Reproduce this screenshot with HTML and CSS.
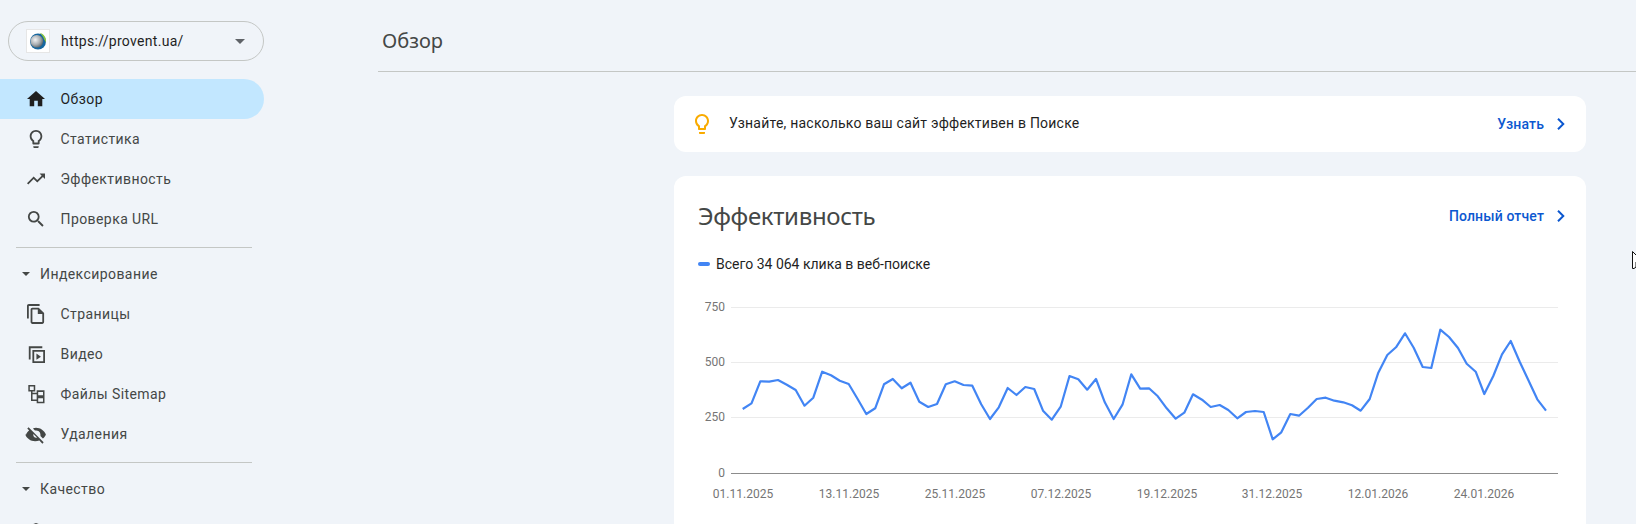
FILE: index.html
```html
<!DOCTYPE html>
<html lang="ru">
<head>
<meta charset="utf-8">
<title>Обзор</title>
<link rel="stylesheet" href="styles.css">
</head>
<body>
<div class="app">
  <aside class="sidebar">
    <div class="picker">
      <span class="favicon">
        <svg width="18" height="18" viewBox="0 0 18 18"><defs><radialGradient id="g" cx="38%" cy="38%" r="65%"><stop offset="0" stop-color="#f2f3f4"/><stop offset=".6" stop-color="#a9aeb2"/><stop offset="1" stop-color="#5f676d"/></radialGradient></defs><circle cx="9" cy="9.500" r="8" fill="#17679f"/><path d="M10.500 .8c4.500 1 7 5 6.500 9.700-.6-1-1.200-2-1.800-3-.9-2.800-2.600-5-4.700-6.700z" fill="#8cc63f"/><circle cx="7.800" cy="9.300" r="6.300" fill="url(#g)"/></svg>
      </span>
      <span class="picker-url">https://provent.ua/</span>
      <span class="caret caret-lg"></span>
    </div>
    <nav class="nav">
      <a class="item active"><svg class="ico" viewBox="0 0 24 24"><path d="M10 20v-6h4v6h5v-8h3L12 3 2 12h3v8z"/></svg><span>Обзор</span></a>
      <a class="item"><svg class="ico" viewBox="0 0 24 24"><path d="M9 21c0 .55.45 1 1 1h4c.55 0 1-.45 1-1v-1H9v1zm3-19C8.140 2 5 5.140 5 9c0 2.380 1.190 4.470 3 5.740V17c0 .55.45 1 1 1h6c.55 0 1-.45 1-1v-2.260c1.810-1.270 3-3.360 3-5.740 0-3.860-3.140-7-7-7zm2.850 11.100l-.85.6V16h-4v-2.300l-.85-.6A4.997 4.997 0 0 1 7 9c0-2.760 2.240-5 5-5s5 2.240 5 5c0 1.630-.8 3.160-2.150 4.100z"/></svg><span>Статистика</span></a>
      <a class="item"><svg class="ico" viewBox="0 0 24 24"><path d="M16 6l2.290 2.290-4.880 4.880-4-4L2 16.590 3.410 18l6-6 4 4 6.300-6.290L22 12V6z"/></svg><span>Эффективность</span></a>
      <a class="item"><svg class="ico" viewBox="0 0 24 24"><path d="M15.500 14h-.79l-.28-.27A6.471 6.471 0 0 0 16 9.500 6.500 6.500 0 1 0 9.500 16c1.610 0 3.090-.59 4.230-1.570l.27.28v.79l5 4.990L20.490 19l-4.990-5zm-6 0C7.010 14 5 11.990 5 9.500S7.010 5 9.500 5 14 7.010 14 9.500 11.990 14 9.500 14z"/></svg><span>Проверка URL</span></a>
      <hr class="rule">
      <div class="section"><span class="caret"></span><span>Индексирование</span></div>
      <a class="item"><svg class="ico" viewBox="0 0 24 24"><path d="M16 1H4c-1.100 0-2 .9-2 2v14h2V3h12V1zm-1 4H8c-1.100 0-2 .9-2 2v14c0 1.100.9 2 2 2h11c1.100 0 2-.9 2-2V11l-6-6zM8 21V7h6v5h5v9H8z"/></svg><span>Страницы</span></a>
      <a class="item"><svg class="ico" viewBox="0 0 24 24"><path d="M4 3.500h15v2H6V18H4z"/><path d="M8 7.500h14V22H8zm2 2V20h10V9.500z" fill-rule="evenodd"/><path d="M12.500 11.500v7l5-3.500z"/></svg><span>Видео</span></a>
      <a class="item"><svg class="ico ico-line" viewBox="0 0 24 24"><path d="M4.300 2.800h6v5.500h-6zM7.300 8.300V19h6M7.300 11.500h6M13.600 8.800h7v5.400h-7zM13.600 16h7v5.400h-7z"/></svg><span>Файлы Sitemap</span></a>
      <a class="item"><svg class="ico" viewBox="0 0 24 24"><path d="M12 5c5 0 9.270 3.110 11 7.500-.7 1.770-1.860 3.300-3.320 4.460L16.900 14.200c.07-.39.1-.79.1-1.200a5 5 0 0 0-6.200-4.850L8.600 5.950A11.800 11.800 0 0 1 12 5zM1 12.500C1.700 10.700 2.900 9.100 4.400 8L2.300 5.900l1.400-1.400 16.800 16.800-1.400 1.400-3.400-3.400c-1.400.5-3 .7-4.700.7-5 0-9.270-3.110-11-7.500zm8 .5a3 3 0 0 0 4.100 2.800L9.200 11.900c-.1.350-.2.7-.2 1.100z"/></svg><span>Удаления</span></a>
      <hr class="rule">
      <div class="section"><span class="caret"></span><span>Качество</span></div>
      <a class="item item-cut"><svg class="ico" viewBox="0 0 24 24"><path d="M12 2l8 3v6c0 5-3.400 9.700-8 11-4.600-1.300-8-6-8-11V5z"/></svg><span>Основные интернет-показатели</span></a>
    </nav>
  </aside>
  <main class="main">
    <header class="topbar"><h1>Обзор</h1></header>
    <div class="content">
      <section class="banner">
        <svg class="bulb" viewBox="0 0 24 24"><path d="M9 21c0 .55.45 1 1 1h4c.55 0 1-.45 1-1v-1H9v1zm3-19C8.140 2 5 5.140 5 9c0 2.380 1.190 4.470 3 5.740V17c0 .55.45 1 1 1h6c.55 0 1-.45 1-1v-2.260c1.810-1.270 3-3.360 3-5.740 0-3.860-3.140-7-7-7zm2.850 11.100l-.85.6V16h-4v-2.300l-.85-.6A4.997 4.997 0 0 1 7 9c0-2.760 2.240-5 5-5s5 2.240 5 5c0 1.630-.8 3.160-2.150 4.100z"/></svg>
        <span class="banner-text">Узнайте, насколько ваш сайт эффективен в Поиске</span>
        <a class="link">Узнать<svg class="chev" viewBox="0 0 24 24"><path d="M9.700 6 8.300 7.400 12.900 12l-4.600 4.600L9.700 18l6-6z"/></svg></a>
      </section>
      <section class="card">
        <div class="card-head">
          <h2>Эффективность</h2>
          <a class="link">Полный отчет<svg class="chev" viewBox="0 0 24 24"><path d="M9.700 6 8.300 7.400 12.900 12l-4.600 4.600L9.700 18l6-6z"/></svg></a>
        </div>
        <div class="legend"><span class="swatch"></span><span>Всего 34 064 клика в веб-поиске</span></div>
        <svg class="chart" width="912" height="228" viewBox="674 296 912 228">
          <g class="grid">
            <line x1="731" x2="1558" y1="307.500" y2="307.500"/>
            <line x1="731" x2="1558" y1="362.500" y2="362.500"/>
            <line x1="731" x2="1558" y1="417.500" y2="417.500"/>
          </g>
          <line class="axis" x1="731" x2="1558" y1="473.500" y2="473.500"/>
          <g class="ylabels">
            <text x="725" y="311">750</text>
            <text x="725" y="366">500</text>
            <text x="725" y="421">250</text>
            <text x="725" y="477">0</text>
          </g>
          <g class="xlabels">
            <text x="743" y="498">01.11.2025</text>
            <text x="849" y="498">13.11.2025</text>
            <text x="955" y="498">25.11.2025</text>
            <text x="1061" y="498">07.12.2025</text>
            <text x="1167" y="498">19.12.2025</text>
            <text x="1272" y="498">31.12.2025</text>
            <text x="1378" y="498">12.01.2026</text>
            <text x="1484" y="498">24.01.2026</text>
          </g>
          <polyline class="line" points="742.700,409 751.500,403.300 760.300,381.300 769.200,381.700 778,380 786.800,384.700 795.700,390 804.500,405.700 813.300,397.700 822.200,371.700 831,375.300 839.800,380.700 848.700,384 857.500,398.700 866.300,414 875.200,408.300 884,384.300 892.800,379 901.700,388.300 910.500,382.700 919.300,401.700 928.200,407 937,404 945.800,384.300 954.700,381.300 963.500,385 972.300,385.700 981.200,404.300 990,419 998.800,407.300 1007.700,388 1016.500,395 1025.300,387 1034.200,389 1043,410.700 1051.800,419.700 1060.700,406.700 1069.500,376 1078.300,379.300 1087.200,389.700 1096,379 1104.800,402.300 1113.700,419 1122.500,404.700 1131.300,374.300 1140.200,388.700 1149,388.300 1157.800,396.300 1166.700,408.300 1175.700,418.700 1184.300,412.700 1193,394.300 1202,399.700 1210.700,407 1219.700,405 1228.300,410 1237.300,418.300 1246,412 1255,411 1263.700,412 1272.700,439.300 1281.300,432.300 1290.300,414 1299,415.700 1308,407.700 1316.700,399 1325.700,397.700 1334.300,400.700 1343.300,402.300 1352,405.300 1360.700,410.700 1369.700,399 1378.300,372.700 1387.300,355 1396,347.300 1405,333.300 1413.700,347.700 1422.700,367 1431.300,368 1440.300,329.700 1449,337 1458,348 1466.700,363.700 1475.700,371.700 1484.300,394 1493.300,376 1502,354.300 1510.700,341 1519.700,361.700 1528.300,380 1537.300,399.300 1546,410.700"/>
        </svg>
      </section>
    </div>
  </main>
</div>
<svg class="cursor" width="6" height="18" viewBox="0 0 6 18"><path d="M.5.500 6 6v6.500L4 11v5l-2 1.500H.5z" fill="#fff" stroke="#111"/></svg>
</body>
</html>
```
FILE: styles.css
```css
* { box-sizing: border-box; }
html, body { margin: 0; height: 100%; overflow: hidden; }
body {
  background: #f0f4f9;
  font-family: Roboto, "Noto Sans", sans-serif;
  color: #1f1f1f;
  position: relative;
}
.app { display: flex; height: 524px; overflow: hidden; }

.sidebar { width: 378px; flex: none; padding-top: 21px; }
.picker {
  width: 256px; height: 40px; margin-left: 8px;
  border: 1px solid #c4c7c5; border-radius: 20px;
  display: flex; align-items: center;
  padding-left: 17px; padding-right: 18px;
}
.favicon {
  width: 24px; height: 24px; background: #fff; border: 1px solid #e6e6e6;
  display: flex; align-items: center; justify-content: center; flex: none;
}
.picker-url { margin-left: 11px; font-size: 14px; font-weight: 400; flex: 1; letter-spacing: .3px; color: #1f1f1f; }
.caret {
  width: 0; height: 0; flex: none;
  border-left: 4.500px solid transparent; border-right: 4.500px solid transparent;
  border-top: 4.500px solid #444746;
}
.caret-lg { border-left-width: 5px; border-right-width: 5px; border-top-width: 5px; border-top-color: #5f6368; }

.nav { margin-top: 18px; display: flex; flex-direction: column; width: 264px; }
.item {
  height: 40px; display: flex; align-items: center; padding-left: 24px; gap: 12.500px;
  font-size: 14px; font-weight: 400; color: #444746; letter-spacing: .42px;
  border-radius: 0 20px 20px 0; white-space: nowrap; flex: none;
}
.item .ico { width: 24px; height: 24px; fill: #444746; flex: none; transform: scale(.9); }
.item .ico-line { fill: none; stroke: #444746; stroke-width: 1.700; }
.item.active { background: #c2e7ff; color: #1f1f1f; }
.item.active .ico { fill: #1f1f1f; }
.item-cut { margin-top: 3px; }
.rule { margin: 8px 12px 7px 16px; border: 0; border-top: 1px solid #c4c7c5; height: 0; width: 236px; flex: none; }
.section {
  height: 39px; display: flex; align-items: center; gap: 10px; padding-left: 22px; padding-bottom: 2px;
  font-size: 14px; font-weight: 400; color: #444746; letter-spacing: .42px; flex: none;
}

.main { flex: 1; min-width: 0; }
.topbar { height: 72px; border-bottom: 1px solid #c4c7c5; padding-left: 4px; display: flex; align-items: center; padding-top: 10px; }
.topbar h1 { margin: 0; font: 400 20px/28px "Noto Sans", Roboto, sans-serif; color: #444746; letter-spacing: 0; }
.content { margin-left: 296px; margin-top: 24px; width: 912px; display: flex; flex-direction: column; gap: 24px; }
.banner {
  height: 56px; background: #fff; border-radius: 12px;
  display: flex; align-items: center; padding: 0 13px 0 16px;
}
.bulb { width: 24px; height: 24px; fill: #f9ab00; flex: none; }
.banner-text { margin-left: 15px; font-size: 14px; flex: 1; letter-spacing: .22px; padding-bottom: 2px; }
.link { display: flex; align-items: center; gap: 5px; color: #0b57d0; font-size: 14px; font-weight: 500; letter-spacing: .15px; }
.chev { width: 24px; height: 24px; fill: #0b57d0; }
.card { background: #fff; border-radius: 12px 12px 0 0; height: 348px; padding-top: 24px; position: relative; }
.card-head { display: flex; align-items: center; justify-content: space-between; padding: 0 13px 0 24px; height: 32px; }
.card-head h2 { margin: 0; font: 400 24px/32px "Noto Sans", Roboto, sans-serif; color: #444746; letter-spacing: -.32px; }
.legend { display: flex; align-items: center; gap: 6px; padding-left: 24px; margin-top: 22px; height: 20px; font-size: 14px; letter-spacing: 0; }
.swatch { width: 12px; height: 4px; border-radius: 2px; background: #4285f4; }
.chart { display: block; position: absolute; left: 0; top: 120px; }
.grid line { stroke: #ebebeb; stroke-width: 1; }
.axis { stroke: #8c8c8c; stroke-width: 1; }
.line { fill: none; stroke: #4285f4; stroke-width: 2.200; stroke-linejoin: round; }
.ylabels text { font-size: 12px; fill: #757575; text-anchor: end; }
.xlabels text { font-size: 12px; fill: #757575; text-anchor: middle; }
.cursor { position: absolute; left: 1632px; top: 251px; }
```
